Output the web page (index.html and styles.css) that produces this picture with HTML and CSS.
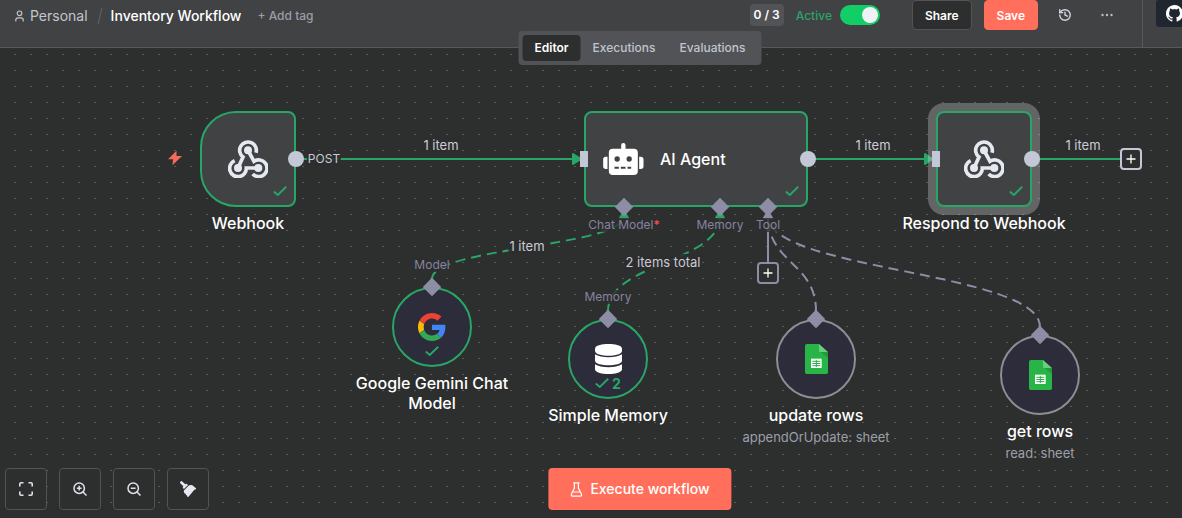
FILE: index.html
```html
<!DOCTYPE html>
<html lang="en">
<head>
<meta charset="utf-8">
<title>Inventory Workflow</title>
<link rel="stylesheet" href="styles.css">
</head>
<body>
<svg class="defs" aria-hidden="true">
  <symbol id="webhook" viewBox="0 0 120 114">
    <g fill="none" stroke="#e6e9f2" stroke-width="11">
      <path d="M30 84 45 51A25 25 0 1 1 84 38"/>
      <path d="M60 31 78 64A25 25 0 1 1 74 102"/>
      <path d="M91 84H55A25 25 0 1 1 20 62"/>
    </g>
    <g fill="#e6e9f2"><circle cx="60" cy="31" r="12"/><circle cx="30" cy="84" r="12"/><circle cx="91" cy="84" r="12"/></g>
  </symbol>
  <symbol id="check" viewBox="0 0 14 10"><path d="M.8 5.500 4.800 9 13.200 .8" fill="none" stroke="#29a568" stroke-width="1.900"/></symbol>
  <symbol id="plus" viewBox="0 0 10 10"><path d="M5 .5v9M.5 5h9" stroke="#fff" stroke-width="1.300"/></symbol>
  <symbol id="sheets" viewBox="0 0 69 90">
    <path d="M5 0H42L69 27V85Q69 90 64 90H5Q0 90 0 85V5Q0 0 5 0Z" fill="#28b446"/>
    <path d="M42 0 69 24H46Q42 24 42 20Z" fill="#6ace7c"/><path d="M47 24H69V42Z" fill="#219b3b"/>
    <path d="M18 44H50V72H18Z" fill="#fff"/>
    <path d="M22 52H46M22 58.500H46M22 65H46M34 48V69" stroke="#28b446" stroke-width="3"/>
  </symbol>
</svg>
<div class="shell">
  <header class="header">
    <nav class="crumbs" aria-label="Breadcrumb">
      <a class="project" href="#"><svg width="9" height="12" viewBox="0 0 9 12" fill="none" stroke="currentColor" stroke-width="1.200"><circle cx="4.500" cy="3.300" r="2.300"/><path d="M.8 11.500V10Q.8 7.800 3 7.800H6Q8.200 7.800 8.200 10v1.500"/></svg>Personal</a>
      <svg class="slash" width="6" height="18" viewBox="0 0 6 18"><path d="M5 1 1 17" stroke="#5b5c5f" stroke-width="1.300"/></svg>
      <h1 class="title">Inventory Workflow</h1>
      <button class="add-tag" type="button">+ Add tag</button>
    </nav>
    <div class="actions">
      <span class="count">0 / 3</span>
      <label class="active" for="active">Active</label>
      <input class="toggle" id="active" type="checkbox" role="switch" checked>
      <button class="btn share" type="button">Share</button>
      <button class="btn save" type="button">Save</button>
      <button class="icon-btn history" type="button" aria-label="History"><svg width="14" height="14" viewBox="0 0 24 24" fill="none" stroke="#d4d6de" stroke-width="2.400" stroke-linecap="round" stroke-linejoin="round"><path d="M3 12a9 9 0 1 0 9-9 9.750 9.750 0 0 0-6.740 2.740L3 8"/><path d="M3 3v5h5M12 7v5l4 2"/></svg></button>
      <button class="icon-btn" type="button" aria-label="More"><svg width="12" height="4" viewBox="0 0 12 4" fill="#babcc8"><circle cx="1.500" cy="2" r="1.200"/><circle cx="6" cy="2" r="1.200"/><circle cx="10.500" cy="2" r="1.200"/></svg></button>
    </div>
    <div class="github">
      <a class="star" href="#" aria-label="GitHub"><svg width="17" height="17" viewBox="0 0 16 16" fill="#fff"><path d="M8 0C3.580 0 0 3.580 0 8c0 3.540 2.290 6.530 5.470 7.590.4.070.55-.17.55-.38 0-.19-.01-.82-.01-1.490-2.010.37-2.530-.49-2.690-.94-.09-.23-.48-.94-.82-1.130-.28-.15-.68-.52-.01-.53.63-.01 1.080.58 1.230.82.72 1.210 1.870.87 2.330.66.07-.52.28-.87.51-1.070-1.780-.2-3.640-.89-3.640-3.950 0-.87.31-1.590.82-2.150-.08-.2-.36-1.020.08-2.120 0 0 .67-.21 2.200.82a7.600 7.600 0 0 1 4 0c1.530-1.040 2.200-.82 2.200-.82.44 1.100.16 1.920.08 2.120.51.56.82 1.270.82 2.150 0 3.070-1.870 3.750-3.650 3.950.29.25.54.73.54 1.480 0 1.070-.01 1.930-.01 2.200 0 .21.15.46.55.38A8.010 8.010 0 0 0 16 8c0-4.420-3.580-8-8-8"/></svg></a>
    </div>
  </header>
  <div class="tabs">
    <button class="tab current" type="button">Editor</button>
    <button class="tab" type="button">Executions</button>
    <button class="tab" type="button">Evaluations</button>
  </div>

  <main class="canvas">
    <svg class="edges" aria-hidden="true">
      <g fill="none" stroke="#29a568" stroke-width="2">
        <path d="M296 111H582M808 111H930M1032 111H1120"/>
        <g stroke-dasharray="8 8" stroke-linecap="square">
          <path d="M432 231C432 199 624 199 624 168"/><path d="M608 263C608 215 720 215 720 168"/>
        </g>
        <g stroke="#8e8da6" stroke-dasharray="8 8" stroke-linecap="square">
          <path d="M816 263C816 215 768 215 768 168"/><path d="M1040 279C1040 223 768 223 768 168"/>
        </g>
        <path d="M768 168V214" stroke="#8e8da6"/>
      </g>
      <g fill="#29a568" stroke="#29a568" stroke-width="2" stroke-linejoin="round">
        <path d="M573 106V116L581 111ZM925 106V116L932 111Z"/>
        <path d="M620 170H628L624 163ZM716 170H724L720 163Z"/>
        <path d="M764 170H772L768 163Z" fill="#8e8da6" stroke="#8e8da6"/>
      </g>
    </svg>

    <span class="edge-label method at-post">POST</span>
    <span class="edge-label at-e1">1 item</span>
    <span class="edge-label at-e2">1 item</span>
    <span class="edge-label at-e3">1 item</span>
    <span class="edge-label at-e4">1 item</span>
    <span class="edge-label at-e5">2 items total</span>

    <svg class="bolt" width="14" height="16" viewBox="0 0 14 16"><path d="M8.500.8 0 9.200H5L4.500 15.300 14 6H8.500Z" fill="#f26b5b"/></svg>

    <section class="node at-webhook">
      <div class="box trigger"><svg width="40" height="38"><use href="#webhook"/></svg><svg class="status" width="14" height="10"><use href="#check"/></svg><i class="handle out"></i></div>
      <h2 class="name">Webhook</h2>
    </section>

    <section class="node at-agent">
      <div class="box wide">
        <svg width="41" height="32" viewBox="130 144 122 96"><g fill="#fff"><rect x="184" y="144" width="13" height="24" rx="6"/><rect x="147" y="161" width="87" height="79" rx="12"/><path d="M143 185V222H138Q130 222 130 214V193Q130 185 138 185ZM238 185V222H243Q251 222 251 214V193Q251 185 243 185Z"/></g><g fill="#414244"><circle cx="172" cy="192" r="8"/><circle cx="208" cy="192" r="8"/><path d="M164 215h13v6h-13zM183 215h14v6h-14zM203 215h11v6h-11z"/></g></svg>
        <h2 class="name">AI Agent</h2>
        <svg class="status" width="14" height="10"><use href="#check"/></svg>
        <i class="handle in"></i><i class="handle out"></i>
        <i class="diamond port-model"></i><i class="diamond port-memory"></i><i class="diamond port-tool"></i>
        <span class="port port-model">Chat Model<b class="required">*</b></span>
        <span class="port port-memory">Memory</span>
        <span class="port port-tool">Tool</span>
      </div>
    </section>

    <section class="node at-respond">
      <div class="box selected"><svg width="40" height="38"><use href="#webhook"/></svg><svg class="status" width="14" height="10"><use href="#check"/></svg><i class="handle in"></i><i class="handle out"></i></div>
      <h2 class="name">Respond to Webhook</h2>
    </section>

    <button class="plus at-plus-tool" type="button" aria-label="Add tool"><svg width="10" height="10"><use href="#plus"/></svg></button>
    <button class="plus light at-plus-end" type="button" aria-label="Add node"><svg width="10" height="10"><use href="#plus"/></svg></button>

    <section class="node at-gemini">
      <div class="box round done"><svg width="28" height="28" viewBox="0 0 48 48"><path fill="#ea4335" d="M24 9.500c3.540 0 6.710 1.220 9.210 3.600l6.850-6.850C35.900 2.380 30.470 0 24 0 14.620 0 6.510 5.380 2.560 13.220l7.980 6.190C12.430 13.720 17.740 9.500 24 9.500z"/><path fill="#4285f4" d="M46.980 24.550c0-1.570-.15-3.090-.38-4.550H24v9.020h12.940c-.58 2.960-2.260 5.480-4.780 7.180l7.730 6c4.510-4.180 7.090-10.360 7.090-17.650z"/><path fill="#fbbc05" d="M10.530 28.590c-.48-1.450-.76-2.990-.76-4.590s.27-3.140.76-4.590l-7.980-6.190C.92 16.460 0 20.120 0 24c0 3.880.92 7.540 2.560 10.780l7.970-6.190z"/><path fill="#34a853" d="M24 48c6.480 0 11.930-2.130 15.890-5.810l-7.730-6c-2.150 1.450-4.920 2.300-8.160 2.300-6.260 0-11.570-4.220-13.470-9.910l-7.980 6.190C6.510 42.620 14.620 48 24 48z"/></svg>
        <span class="result"><svg width="14" height="10"><use href="#check"/></svg></span><i class="diamond"></i><span class="port">Model</span></div>
      <h2 class="name">Google Gemini Chat Model</h2>
    </section>

    <section class="node at-memory">
      <div class="box round done"><svg width="27" height="30" viewBox="0 0 81 90" fill="#fff"><path d="M0 14C0-5 81-5 81 14V21C81 40 0 40 0 21Z"/><path d="M0 31C18 43 63 43 81 31V50C81 68 0 68 0 50Z"/><path d="M0 61C18 73 63 73 81 61V76C81 95 0 95 0 76Z"/></svg>
        <span class="result"><svg width="14" height="10"><use href="#check"/></svg>2</span><i class="diamond"></i><span class="port">Memory</span></div>
      <h2 class="name">Simple Memory</h2>
    </section>

    <section class="node at-update">
      <div class="box round"><svg width="23" height="30"><use href="#sheets"/></svg><i class="diamond"></i></div>
      <h2 class="name">update rows</h2>
      <p class="detail">appendOrUpdate: sheet</p>
    </section>

    <section class="node at-get">
      <div class="box round"><svg width="23" height="30"><use href="#sheets"/></svg><i class="diamond"></i></div>
      <h2 class="name">get rows</h2>
      <p class="detail">read: sheet</p>
    </section>

    <div class="controls">
      <button type="button" aria-label="Fit view"><svg width="14" height="14" viewBox="0 0 14 14" fill="none" stroke="#dfe1ea" stroke-width="1.600"><path d="M.8 4.500V2Q.8.8 2 .8H4.500M9.500.8H12Q13.200.8 13.200 2V4.500M13.200 9.500V12Q13.200 13.200 12 13.200H9.500M4.500 13.200H2Q.8 13.200.8 12V9.500"/></svg></button>
      <button type="button" aria-label="Zoom in"><svg width="14" height="14" viewBox="0 0 14 14" fill="none" stroke="#dfe1ea" stroke-width="1.500"><circle cx="6.200" cy="6.200" r="5.200"/><path d="M10 10 13.500 13.500M6.200 3.800V8.600M3.800 6.200H8.600"/></svg></button>
      <button type="button" aria-label="Zoom out"><svg width="14" height="14" viewBox="0 0 14 14" fill="none" stroke="#dfe1ea" stroke-width="1.500"><circle cx="6.200" cy="6.200" r="5.200"/><path d="M10 10 13.500 13.500M3.800 6.200H8.600"/></svg></button>
      <button type="button" aria-label="Tidy up"><svg width="16" height="16" viewBox="0 0 48 48" fill="#e6e9f2"><path d="M5 0 16 10 20 8 24 12 12 24 8 20 10 16 0 6Q0 0 5 0Z"/><path d="M27 13 36 12 48 22V25L43 26 25 48 22 47 21 43 18 43 17 38 13 37 11 29Z"/></svg></button>
    </div>
    <button class="execute" type="button"><svg width="12" height="15" viewBox="0 0 12 15" fill="none" stroke="#fff" stroke-width="1.200" stroke-linejoin="round"><path d="M2.800.8H9.200M4 .8V6L.8 12.500Q.6 14.200 2 14.200H10Q11.400 14.200 11.200 12.500L8 6V.8M2.400 10H9.600"/></svg>Execute workflow</button>
  </main>
</div>
</body>
</html>
```
FILE: styles.css
```css
* { box-sizing: border-box; }
html, body { height: 100%; }
body { margin: 0; overflow: hidden; background: #2d2e2e; color: #fff; font-family: Inter, "Liberation Sans", sans-serif; }
button { font: inherit; color: inherit; border: 0; padding: 0; background: none; display: flex; align-items: center; justify-content: center; }
a { color: inherit; text-decoration: none; }
h1, h2, p { margin: 0; }
svg { flex: none; }
.defs { position: absolute; width: 0; height: 0; }

/* The workspace runs past the right edge of the window. */
.shell { position: relative; width: calc(100% + 98px); min-height: 100%; display: flex; flex-direction: column; }

.header { display: flex; height: 48px; background: #414244; border-bottom: 1px solid #58595b; }
.crumbs { display: flex; align-items: center; flex: 1; height: 31px; padding-left: 15px; font-size: 14px; line-height: 16px; }
.project { display: flex; align-items: center; gap: 6px; color: #c3c5d0; }
.slash { margin: 0 8px 0 9px; }
.title { font-size: 14px; font-weight: 500; }
.add-tag { margin-left: 16px; font-size: 12px; font-weight: 500; color: #9b9ea9; }
.actions { display: flex; align-items: center; height: 30px; padding-right: 29px; font-size: 12px; }
.count { padding: 0 4px; line-height: 22px; border-radius: 4px; background: #525356; font-size: 12px; font-weight: 600; }
.active { margin: 0 8px 0 12px; color: #29a568; font-weight: 500; }
.toggle { appearance: none; display: flex; align-items: center; justify-content: flex-end; width: 40px; height: 20px; margin: 0 32px 0 0; padding: 2px; border-radius: 10px; background: #13ce66; }
.toggle::before { content: ""; width: 16px; height: 16px; border-radius: 50%; background: #f1f2f8; }
.btn { height: 30px; padding: 0 12px; border: 1px solid #ff6f5c; border-radius: 4px; font-weight: 600; }
.share { border-color: #525356; background: #2d2e2e; }
.save { margin-left: 12px; background: #ff6f5c; }
.icon-btn { height: 30px; }
.history { margin: 0 29px 0 20px; }
.github { width: 138px; padding-left: 13px; border-left: 1px solid #58595b; }
.star { display: flex; align-items: center; width: 110px; height: 27px; padding-left: 10px; border-radius: 3px; background: #1f2630; }

.tabs { position: absolute; z-index: 2; top: 31px; left: 50%; transform: translateX(-50%); display: flex; padding: 4px; border-radius: 4px; background: #525356; font-size: 12px; font-weight: 500; }
.tab { height: 26px; padding: 0 12px 2px; border-radius: 4px; color: #c0c3cf; }
.tab.current { background: #2d2e2e; color: #fff; font-weight: 600; }

.canvas { position: relative; flex: 1; }
/* One 2x1 dot every 16px. */
.canvas::before { content: ""; position: absolute; inset: 0; background: linear-gradient(90deg, #5a5b5b 2px, transparent 2px) 14px 0 / 16px 100%; mask: linear-gradient(#000 1px, transparent 1px) 0 6px / 100% 16px; }
.edges { position: absolute; inset: 0; width: 100%; height: 100%; }
.edge-label { position: absolute; transform: translate(-50%, -50%); padding: 0 1px; background: rgba(45, 46, 46, .9); color: #c9cbd6; font-size: 13px; line-height: 16px; white-space: nowrap; }
.method { font-size: 12px; }
.at-post { left: 324px; top: 111px; }
.at-e1 { left: 441px; top: 97px; }
.at-e2 { left: 873px; top: 97px; }
.at-e3 { left: 1083px; top: 97px; }
.at-e4 { left: 527px; top: 198px; }
.at-e5 { left: 663px; top: 214px; }
.bolt { position: absolute; left: 168px; top: 102px; }

.node { position: absolute; display: flex; flex-direction: column; align-items: center; }
.at-webhook { left: 200px; top: 63px; width: 96px; }
.at-agent { left: 584px; top: 63px; width: 224px; }
.at-respond { left: 936px; top: 63px; width: 96px; }
.at-gemini { left: 392px; top: 239px; width: 80px; }
.at-memory { left: 568px; top: 271px; width: 80px; }
.at-update { left: 776px; top: 271px; width: 80px; }
.at-get { left: 1000px; top: 287px; width: 80px; }

.box { position: relative; display: flex; align-items: center; justify-content: center; width: 100%; height: 96px; border: 2px solid #29a568; border-radius: 8px; background: #414244; }
.trigger { border-radius: 36px 8px 8px 36px; }
.selected { box-shadow: 0 0 0 8px rgba(255, 255, 255, .26); }
.wide { justify-content: flex-start; gap: 16px; padding-left: 17px; }
.round { height: 80px; border-color: #8d8e94; border-radius: 50%; background: #2c2c3a; }
.done { border-color: #29a568; }
.name { width: max-content; max-width: 180px; margin-top: 6px; font-size: 16px; font-weight: 500; line-height: 20px; text-align: center; }
.wide .name { margin-top: 0; }
.detail { margin-top: 4px; width: max-content; color: #9c9ea8; font-size: 13px; line-height: 16px; }
.status { position: absolute; right: 7px; bottom: 9px; }
.result { position: absolute; bottom: 6px; left: 0; right: 0; display: flex; align-items: center; justify-content: center; gap: 3px; height: 16px; color: #29a568; font-size: 14px; font-weight: 700; }
.handle { position: absolute; top: 38px; height: 16px; background: #c4c8d6; }
.handle.out { right: -10px; width: 16px; border-radius: 50%; }
.handle.in { left: -6px; width: 8px; }
.diamond { position: absolute; left: 50%; top: -2px; width: 13px; height: 13px; background: #8e8da6; transform: translate(-50%, -50%) rotate(45deg); }
.port { position: absolute; left: 50%; top: -24px; transform: translate(-50%, -50%); color: #8583a0; font-size: 12px; line-height: 14px; background: rgba(45, 46, 46, .8); white-space: nowrap; }
.wide .diamond { top: 94px; }
.wide .port { top: 112px; }
.box .port-model { left: 38px; }
.box .port-memory { left: 134px; }
.box .port-tool { left: 182px; }
.required { color: #ff4d4d; font-weight: 500; }

.plus { position: absolute; width: 22px; height: 22px; border: 2px solid #8e8da6; border-radius: 4px; background: #2d2e2e; }
.plus.light { border-color: #c4c8d6; }
.at-plus-tool { left: 757px; top: 214px; }
.at-plus-end { left: 1120px; top: 100px; }

.controls { position: absolute; left: 5px; bottom: 8px; display: flex; gap: 12px; }
.controls button { width: 42px; height: 42px; border: 1px solid #525356; border-radius: 4px; background: #2d2e2e; }
.execute { position: absolute; bottom: 8px; left: 50%; transform: translateX(-50%); gap: 8px; height: 42px; padding: 0 22px; border-radius: 4px; background: #ff6f5c; font-size: 14px; font-weight: 500; line-height: 16px; white-space: nowrap; }
```
